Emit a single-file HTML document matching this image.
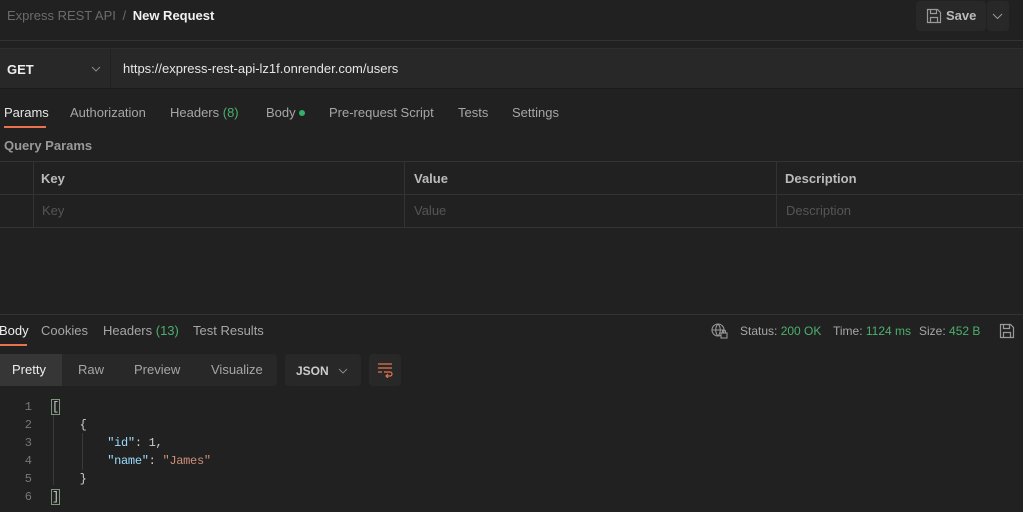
<!DOCTYPE html>
<html><head><style>
body{margin:0;width:1023px;height:512px;background:#212121;font-family:"Liberation Sans",sans-serif;font-size:13px;color:#a6a6a6;position:relative;overflow:hidden}
.a{position:absolute;white-space:nowrap}
.g{color:#4caf6e}
.ln{position:absolute;background:#333}
.mono{font-family:"Liberation Mono",monospace;font-size:12px}
</style></head><body>
<div class="a" style="left:7px;top:8px;color:#6b6b6b">Express REST API <span style="margin:0 3px">/</span> <b style="color:#f0f0f0">New Request</b></div>
<div class="a" style="left:916px;top:1px;width:70px;height:30px;background:#282828;border-radius:4px"></div>
<div class="a" style="left:987px;top:1px;width:22px;height:30px;background:#282828;border-radius:4px"></div>
<svg class="a" style="left:926px;top:8px" width="16" height="16" viewBox="0 0 16 16" fill="none" stroke="#999" stroke-width="1.2"><path d="M1.5 1.5h10l3 3v10h-13z M4.5 1.5v4h6v-4 M4.5 14.5v-5h7v5"/></svg>
<div class="a" style="left:946px;top:8px;color:#bbb;font-weight:bold">Save</div>
<svg class="a" style="left:992px;top:13px" width="11" height="7"><path d="M1 1l4.5 4.5 4.5-4.5" stroke="#999" fill="none"/></svg>
<div class="ln" style="left:0;top:40px;width:1023px;height:1px"></div>
<div class="ln" style="left:0;top:48px;width:1023px;height:1px;background:#2e2e2e"></div>
<div class="a" style="left:0;top:49px;width:110px;height:39px;background:#282828"></div>
<div class="a" style="left:111px;top:49px;width:912px;height:39px;background:#282828"></div>
<div class="ln" style="left:0;top:88px;width:1023px;height:1px;background:#1a1a1a"></div>
<div class="a" style="left:7px;top:62px;color:#eee;font-weight:bold">GET</div>
<svg class="a" style="left:91px;top:66px" width="10" height="6"><path d="M1 1l4 4 4-4" stroke="#888" fill="none"/></svg>
<div class="a" style="left:123px;top:61px;color:#e6e6e6">https://express-rest-api-lz1f.onrender.com/users</div>
<div class="a" style="left:4px;top:105px;color:#e6e6e6">Params</div>
<div class="a" style="left:4px;top:126px;width:42px;height:2px;background:#e8734d"></div>
<div class="a" style="left:70px;top:105px">Authorization</div>
<div class="a" style="left:170px;top:105px">Headers <span class="g">(8)</span></div>
<div class="a" style="left:266px;top:105px">Body <span style="display:inline-block;width:6px;height:6px;border-radius:3px;background:#2fb36b;vertical-align:1px"></span></div>
<div class="a" style="left:329px;top:105px">Pre-request Script</div>
<div class="a" style="left:458px;top:105px">Tests</div>
<div class="a" style="left:512px;top:105px">Settings</div>
<div class="a" style="left:4px;top:138px;font-weight:bold;color:#999">Query Params</div>
<div class="ln" style="left:0;top:161px;width:1023px;height:1px"></div>
<div class="ln" style="left:0;top:194px;width:1023px;height:1px"></div>
<div class="ln" style="left:0;top:227px;width:1023px;height:1px"></div>
<div class="ln" style="left:33px;top:161px;width:1px;height:66px"></div>
<div class="ln" style="left:404px;top:161px;width:1px;height:66px"></div>
<div class="ln" style="left:776px;top:161px;width:1px;height:66px"></div>
<div class="a" style="left:41px;top:171px;font-weight:bold;color:#bbb">Key</div>
<div class="a" style="left:414px;top:171px;font-weight:bold;color:#bbb">Value</div>
<div class="a" style="left:785px;top:171px;font-weight:bold;color:#bbb">Description</div>
<div class="a" style="left:42px;top:203px;color:#555">Key</div>
<div class="a" style="left:414px;top:203px;color:#555">Value</div>
<div class="a" style="left:786px;top:203px;color:#555">Description</div>
<div class="ln" style="left:0;top:314px;width:1023px;height:1px"></div>
<div class="a" style="left:-1px;top:323px;color:#eee">Body</div>
<div class="a" style="left:0;top:344px;width:27px;height:2px;background:#e8734d"></div>
<div class="a" style="left:41px;top:323px">Cookies</div>
<div class="a" style="left:103px;top:323px">Headers <span class="g">(13)</span></div>
<div class="a" style="left:193px;top:323px">Test Results</div>
<svg class="a" style="left:711px;top:323px" width="17" height="17" viewBox="0 0 17 17" fill="none" stroke="#999" stroke-width="1.1"><circle cx="7" cy="7" r="6"/><path d="M1 7h12M7 1c-3 3-3 9 0 12M7 1c3 3 3 9 0 12"/><rect x="10" y="10" width="6" height="5" fill="#212121"/><path d="M11.5 10v-1.5a1.5 1.5 0 013 0V10"/></svg>
<div class="a" style="left:740px;top:324px;font-size:12px">Status: <span class="g">200 OK</span></div>
<div class="a" style="left:833px;top:324px;font-size:12px">Time: <span class="g">1124 ms</span></div>
<div class="a" style="left:919px;top:324px;font-size:12px">Size: <span class="g">452 B</span></div>
<svg class="a" style="left:999px;top:323px" width="16" height="16" viewBox="0 0 16 16" fill="none" stroke="#999" stroke-width="1.2"><path d="M1.5 1.5h10l3 3v10h-13z M4.5 1.5v4h6v-4 M4.5 14.5v-5h7v5"/></svg>
<div class="a" style="left:0;top:354px;width:277px;height:32px;background:#282828;border-radius:0 4px 4px 0"></div>
<div class="a" style="left:0;top:354px;width:62px;height:32px;background:#363636"></div>
<div class="a" style="left:12px;top:362px;color:#eee">Pretty</div>
<div class="a" style="left:78px;top:362px">Raw</div>
<div class="a" style="left:134px;top:362px">Preview</div>
<div class="a" style="left:211px;top:362px">Visualize</div>
<div class="a" style="left:285px;top:354px;width:76px;height:32px;background:#282828;border-radius:4px"></div>
<div class="a" style="left:296px;top:364px;font-size:12px;font-weight:bold;color:#ccc">JSON</div>
<svg class="a" style="left:338px;top:368px" width="10" height="6"><path d="M1 1l4 4 4-4" stroke="#888" fill="none"/></svg>
<div class="a" style="left:369px;top:354px;width:32px;height:32px;background:#282828;border-radius:4px"></div>
<svg class="a" style="left:377px;top:362px" width="17" height="16" fill="none" stroke="#e8734d" stroke-width="1.2"><path d="M1 2h14M1 6h14M1 10h4M7 10h6a2 2 0 010 4h-3M11 12l-2 2 2 2"/></svg>
<div class="mono" style="position:absolute;left:0;top:398px;color:#777;line-height:18px;width:32px;text-align:right">1<br>2<br>3<br>4<br>5<br>6</div>
<div class="ln" style="left:53px;top:415px;width:1px;height:70px;background:#3a3a3a"></div>
<div class="ln" style="left:82px;top:433px;width:1px;height:37px;background:#3a3a3a"></div>
<div class="mono" style="position:absolute;left:52px;top:398px;color:#ccc;line-height:18px;white-space:pre;letter-spacing:-0.3px"><span style="outline:1px solid #7a9a7a">[</span>
    {
        <span style="color:#9cdcfe">"id"</span>: 1,
        <span style="color:#9cdcfe">"name"</span>: <span style="color:#ce9178">"James"</span>
    }
<span style="outline:1px solid #7a9a7a">]</span></div>
</body></html>
